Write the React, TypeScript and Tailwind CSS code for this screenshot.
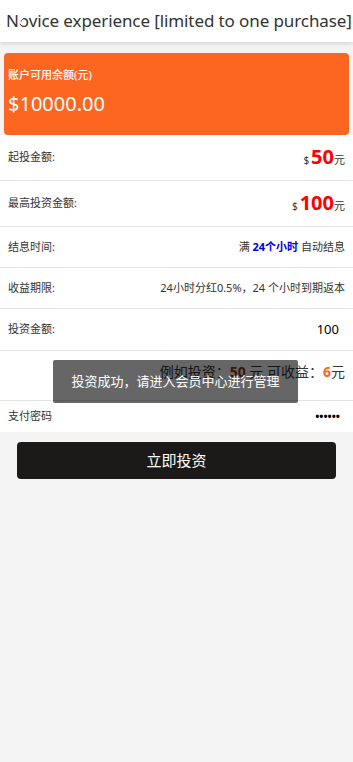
import React from "react";

const font = { fontFamily: '"Noto Sans", "Noto Sans CJK SC", sans-serif' };

function Row({ label, children, h, border = true }: { label: string; children?: React.ReactNode; h: string; border?: boolean }) {
  return (
    <div className={`flex items-center justify-between px-2 bg-white ${h} ${border ? "border-b border-[#e4e4e4]" : ""}`}>
      <span className="text-[11px] text-[#333]">{label}</span>
      <div className="flex items-baseline text-[#333]">{children}</div>
    </div>
  );
}

export default function App() {
  return (
    <div className="w-[353px] min-h-[762px] bg-[#f4f4f4] relative" style={font}>
      <div className="h-[42px] bg-white shadow-[0_2px_4px_rgba(0,0,0,0.12)] flex items-center pl-[6px] relative">
        <span className="text-[17px] text-[#333] whitespace-nowrap tracking-[-0.1px]">Novice experience [limited to one purchase]</span>
        <svg className="absolute left-[17px] top-[16px]" width="8" height="10" viewBox="0 0 8 10">
          <path d="M6 1 L2 5 L6 9" stroke="#fff" strokeWidth="2" fill="none" />
        </svg>
      </div>
      <div className="mx-[4px] mt-[11px] h-[82px] rounded-[4px] bg-[#fc6621] px-[4px] pt-[15px] text-white">
        <div className="text-[11px] leading-[14px] font-medium">账户可用余额(元)</div>
        <div className="text-[20px] leading-[24px] mt-[10px]">$10000.00</div>
      </div>
      <div className="flex flex-col">
        <Row label="起投金额:" h="h-[46px]">
          <span className="text-[10px] mr-[2px]">$</span>
          <span className="text-[20px] font-bold text-[#ff0000] leading-none">50</span>
          <span className="text-[11px]">元</span>
        </Row>
        <Row label="最高投资金额:" h="h-[46px]">
          <span className="text-[10px] mr-[2px]">$</span>
          <span className="text-[20px] font-bold text-[#ff0000] leading-none">100</span>
          <span className="text-[11px]">元</span>
        </Row>
        <Row label="结息时间:" h="h-[41px]">
          <span className="text-[11px]">满 <span className="font-bold text-[#0000ee]">24个小时</span> 自动结息</span>
        </Row>
        <Row label="收益期限:" h="h-[41px]">
          <span className="text-[11px]">24小时分红0.5%，24 个小时到期返本</span>
        </Row>
        <Row label="投资金额:" h="h-[42px]">
          <span className="text-[13px] text-black mr-[6px]">100</span>
        </Row>
        <Row label="" h="h-[50px]">
          <span className="text-[14px] -mt-[8px]">例如投资：<span className="font-bold text-[#8b3a0f]">50</span> 元 可收益：<span className="font-bold text-[#fc6621]">6</span>元</span>
        </Row>
        <Row label="支付密码" h="h-[31px]" border={false}>
          <span className="text-[11px] font-bold text-black tracking-[0px] mr-[5px]">••••••</span>
        </Row>
      </div>
      <div className="px-[17px] mt-[10px]">
        <button className="w-full h-[37px] rounded-[4px] bg-[#1b1a19] text-white text-[15px]">立即投资</button>
      </div>
      <div className="absolute left-[53px] top-[360px] w-[245px] h-[43px] bg-[rgba(0,0,0,0.6)] rounded-[2px] flex items-center justify-center text-white text-[13px]">
        投资成功，请进入会员中心进行管理
      </div>
    </div>
  );
}
